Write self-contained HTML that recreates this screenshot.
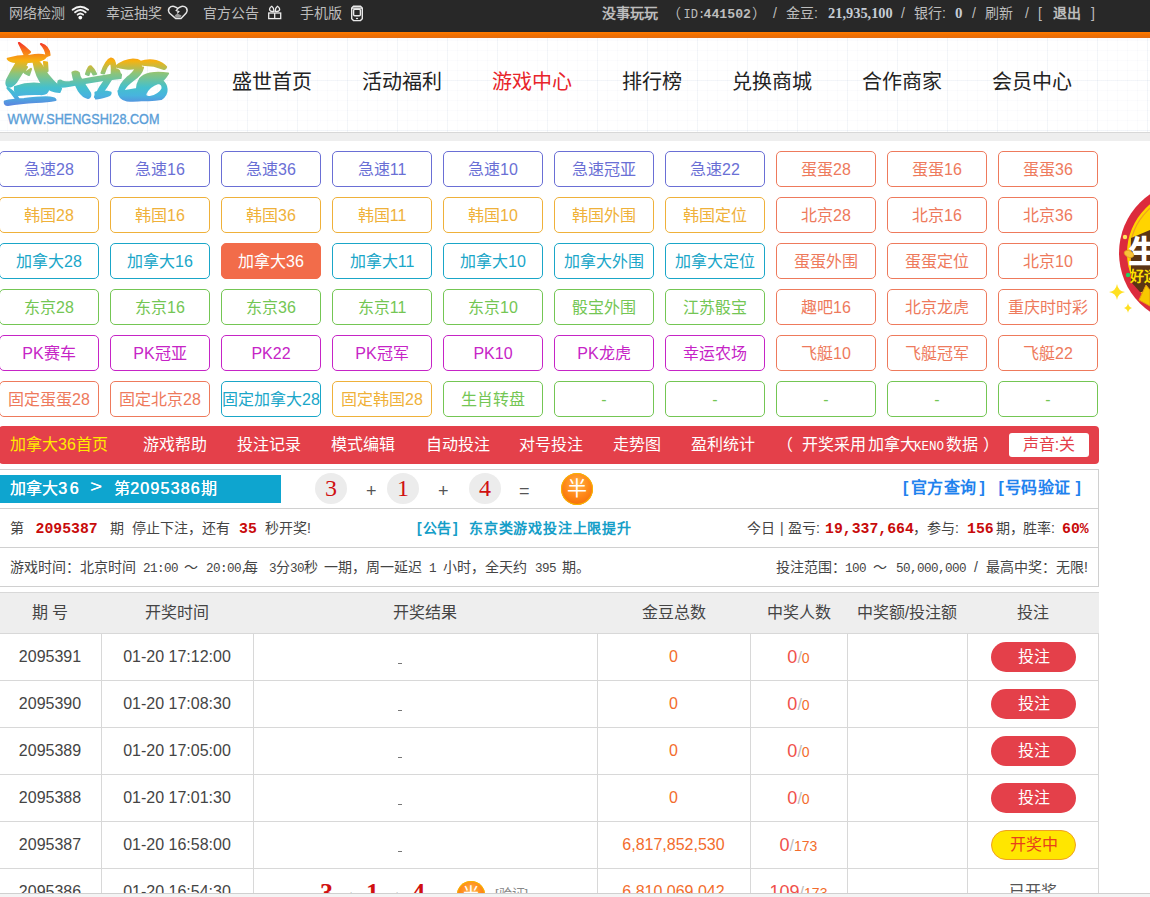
<!DOCTYPE html>
<html lang="zh-CN"><head><meta charset="utf-8">
<style>
*{margin:0;padding:0;box-sizing:border-box}
html,body{width:1150px;height:897px;overflow:hidden;background:#fff;font-family:"Liberation Sans",sans-serif;color:#333;position:relative}
.abs{position:absolute;white-space:nowrap}
b{font-weight:bold}
#top{position:absolute;left:0;top:0;width:1150px;height:32px;background:#282828;color:#bdbdbd;font-size:14px}
#top .tt{top:4.5px;line-height:16px}
#top .b{font-weight:bold}
#top .num{font-family:"Liberation Serif",serif;font-weight:bold;color:#c5ccd4;font-size:15px}
#orange{position:absolute;left:0;top:32px;width:1150px;height:6px;background:linear-gradient(#ff7a00,#f07000 50%,#e66c10)}
#hdr{position:absolute;left:0;top:38px;width:1150px;height:94px;background-color:#fff;
 background-image:linear-gradient(to right,rgba(200,212,228,.17) 1px,transparent 1px),linear-gradient(to bottom,rgba(200,212,228,.17) 1px,transparent 1px),
 linear-gradient(to right,rgba(205,215,230,.08) 1px,transparent 1px),linear-gradient(to bottom,rgba(205,215,230,.08) 1px,transparent 1px);
 background-size:50px 50px,50px 50px,10px 10px,10px 10px;background-position:47px 42px,47px 42px,7px 2px,7px 2px}
#hline{position:absolute;left:0;top:132px;width:1150px;height:1px;background:#d8d8d8}
#hband{position:absolute;left:0;top:133px;width:1150px;height:8px;background:#eeeeee}
.nav{position:absolute;top:70px;font-size:20px;line-height:24px;color:#222;white-space:nowrap}
.gb{position:absolute;width:100px;height:36px;border:1px solid;border-radius:5px;font-size:16px;line-height:36px;text-align:center;background:#fff;white-space:nowrap}
.c1{color:#6a6fd5;border-color:#6a6fd5}
.c2{color:#efb13a;border-color:#efb13a}
.c3{color:#1aa6c8;border-color:#1aa6c8}
.c4{color:#74c654;border-color:#74c654}
.c5{color:#c624c6;border-color:#c624c6}
.c6{color:#ee7a5c;border-color:#ee7a5c}
.gb.act{background:#f26c4a;border-color:#f26c4a;color:#fff}
#rbar{position:absolute;left:-1px;top:426px;width:1100px;height:38px;background:#e4404a;border-radius:4px;color:#fff;font-size:16px}
#rbar .it{position:absolute;top:9px;line-height:20px;white-space:nowrap}
#sound{position:absolute;left:1010px;top:7px;width:80px;height:24px;background:#fff;border-radius:3px;color:#e4404a;font-size:16px;line-height:24px;text-align:center}
#info{position:absolute;left:-1px;top:469px;width:1100px;height:118px;border:1px solid #d0d0d0}
.ln{position:absolute;height:1px;background:#d0d0d0}
#crumb{position:absolute;left:0;top:475px;width:281px;height:28px;background:#0ea5cf;color:#fff;font-size:16px;font-weight:bold;line-height:20px}
.ball{position:absolute;top:473px;width:32px;height:31px;border-radius:50%;background:#ececec;color:#d01010;font-family:"Liberation Serif",serif;font-size:24px;line-height:31px;text-align:center}
.op{top:481px;font-size:18px;color:#555;line-height:20px}
.oball{position:absolute;border-radius:50%;background:radial-gradient(circle at 50% 35%,#ffb347 0%,#ff8a1a 45%,#f06000 100%);color:#fff;text-align:center;box-shadow:0 0 0 1px #f7b500 inset}
.lnk{top:479px;font-size:16px;font-weight:bold;color:#1f82ee;line-height:18px;letter-spacing:0.3px}
.r2{top:520px;font-size:14px;line-height:16px;color:#444}
.r3{top:559px;font-size:14px;line-height:16px;color:#444}
.red{color:#d01010}
.notice{color:#159ec8;font-weight:bold}
#thead{position:absolute;left:-1px;top:592px;width:1100px;height:42px;background:#eeeeee;border-top:1px solid #d8d8d8;border-bottom:1px solid #d8d8d8}
.th{position:absolute;top:603px;line-height:20px;font-size:16px;color:#444;text-align:center}
.ln2{position:absolute;height:1px;background:#d8d8d8}
.vl{position:absolute;top:634px;width:1px;height:270px;background:#d8d8d8}
.td{position:absolute;height:46px;line-height:46px;font-size:16px;color:#444;text-align:center;white-space:nowrap}
.dash{position:absolute;width:4px;height:1px;background:#777}
.gold{color:#f36c2c}
.w1{color:#f0504a;font-size:18px}
.sl{color:#bbb;font-size:16px}
.w2{color:#f36c2c;font-size:14px}
.bet{position:absolute;width:85px;height:30px;border-radius:15px;background:#e4404a;color:#fff;font-size:16px;line-height:30px;text-align:center}
.kj{position:absolute;width:85px;height:30px;border-radius:15px;background:#ffe600;border:1px solid #f0a020;color:#e8401a;font-size:16px;line-height:28px;text-align:center}
.bn{font-family:"Liberation Serif",serif;font-weight:bold;font-size:26px;color:#d01010;line-height:26px}
#foot{position:absolute;left:0;top:893px;width:1150px;height:4px;background:#f4f4f4;border-top:1px solid #d0d0d0}
.rn{font-family:"Liberation Mono",monospace;font-weight:bold;font-size:14.8px;color:#c80a0a}
.nl{letter-spacing:0.8px}
.m{font-family:"Liberation Mono",monospace;font-size:12.6px;letter-spacing:-0.56px}
.cd{font-family:"Liberation Sans",sans-serif;font-size:16px;letter-spacing:2.6px}
.cd2{font-family:"Liberation Sans",sans-serif;font-size:16px;letter-spacing:1.2px}
#crumb{font-weight:normal;text-shadow:0.4px 0 0 #fff}

</style></head><body>
<div id="top">
<span class="abs tt" style="left:9px">网络检测</span>
<svg class="abs" style="left:0;top:0" width="380" height="31" viewBox="0 0 380 31">
<g fill="none" stroke="#f2f2f2" stroke-linecap="round">
<path d="M72.6 9.7 Q80.3 3.6 88.1 9.7" stroke-width="1.9"/>
<path d="M75.1 12.3 Q80.3 7.6 85.6 12.3" stroke-width="1.9"/>
<path d="M77.6 14.7 Q80.3 12.2 83.1 14.7" stroke-width="1.8"/>
</g>
<circle cx="80.3" cy="17.6" r="1.9" fill="#fff"/>
<path d="M175.6 18.4 L181 18.4 L186 13.2 Q188 10.5 186.4 8 Q184.5 5.9 181.5 6.4 Q179.2 6.9 177.8 8.6 Q176.4 6.9 174.1 6.4 Q171.1 5.9 169.2 8 Q167.6 10.5 169.6 13.2 Z" fill="none" stroke="#e6e6e6" stroke-width="1.5" stroke-linejoin="round"/>
<path d="M177.8 8.6 L176.2 10.6 L178.8 11.6 L177.2 13.4" fill="none" stroke="#e6e6e6" stroke-width="1.2"/>
<path d="M174.8 15.2 L177.4 13.6 L181.5 15.4 L180.3 17.8 L175.8 17.8 Z" fill="#9a9a9a"/>
<g fill="none" stroke="#ececec" stroke-width="1.3">
<path d="M274 11.3 Q270.5 12 269.6 10 Q269.2 7.6 271.8 6.2 Q273.8 7.5 274 11.3 Z"/>
<path d="M275.2 11.3 Q278.7 12 279.6 10 Q280 7.6 277.4 6.2 Q275.4 7.5 275.2 11.3 Z"/>
<rect x="268.7" y="13" width="12" height="5.6"/>
</g>
<path d="M274.7 13 V18.6" stroke="#ececec" stroke-width="1.3"/>
<g fill="none" stroke="#e8e8e8" stroke-width="1.4">
<path d="M353.5 6.3 H360.5 L362.3 8 V18.8 L360.5 20.6 H353.5 L351.7 18.8 V8 Z"/>
<path d="M352 8.1 H362"/>
<rect x="353.6" y="9.3" width="6.8" height="6.4" rx="1.2"/>
</g>
<ellipse cx="357" cy="18.5" rx="1.2" ry="0.7" fill="#e8e8e8"/>
</svg>
<span class="abs tt" style="left:106px">幸运抽奖</span>
<span class="abs tt" style="left:203px">官方公告</span>
<span class="abs tt" style="left:300px">手机版</span>
<span class="abs tt b" style="left:602px">没事玩玩</span>
<span class="abs tt" style="left:667px">（</span>
<span class="abs tt" style="left:683.5px;top:7px;font-family:'Liberation Mono',monospace;font-size:12px">ID:</span>
<span class="abs tt" style="left:703.5px;top:7px;font-family:'Liberation Mono',monospace;font-size:13.2px;font-weight:bold">441502</span>
<span class="abs tt" style="left:752px">）</span>
<span class="abs tt" style="left:773px">/</span>
<span class="abs tt" style="left:786px">金豆:</span>
<span class="abs tt num" style="left:828px;font-size:14.4px">21,935,100</span>
<span class="abs tt" style="left:901px">/</span>
<span class="abs tt" style="left:914px">银行:</span>
<span class="abs tt num" style="left:955px">0</span>
<span class="abs tt" style="left:972px">/</span>
<span class="abs tt" style="left:985px">刷新</span>
<span class="abs tt" style="left:1025px">/</span>
<span class="abs tt" style="left:1038px">[</span>
<span class="abs tt b" style="left:1053px">退出</span>
<span class="abs tt" style="left:1091px">]</span>
</div>
<div id="orange"></div>
<div id="hdr"></div>
<div id="hline"></div><div id="hband"></div>
<div class="nav" style="left:232px">盛世首页</div>
<div class="nav" style="left:362px">活动福利</div>
<div class="nav" style="left:492px;color:#e8242a">游戏中心</div>
<div class="nav" style="left:622px">排行榜</div>
<div class="nav" style="left:732px">兑换商城</div>
<div class="nav" style="left:862px">合作商家</div>
<div class="nav" style="left:992px">会员中心</div>
<svg class="abs" style="left:0;top:0" width="180" height="132" viewBox="0 0 180 132">
<defs><linearGradient id="lg" x1="0" y1="42" x2="0" y2="105" gradientUnits="userSpaceOnUse">
<stop offset="0" stop-color="#f5302a"/><stop offset="0.15" stop-color="#f77a18"/><stop offset="0.3" stop-color="#f7b210"/><stop offset="0.5" stop-color="#8cc47a"/><stop offset="0.72" stop-color="#45c0cc"/><stop offset="0.85" stop-color="#48b4de"/><stop offset="1" stop-color="#5a88e0"/></linearGradient></defs>
<g fill="url(#lg)" stroke="url(#lg)" stroke-width="2.2" stroke-linejoin="round">
<!-- 盛 -->
<path d="M19 43 Q25 47 30 52 L25 55.5 Q22 49 19 43 Z"/>
<path d="M41 44 Q49 46.5 49.5 55 L46.5 56 Q46 49 41 44 Z"/>
<path d="M7.8 58.7 Q18 55.5 30 55.8 Q40 54 46.5 56 Q44 60 36 61.5 Q24 62.5 16 62 Q10 61.5 7.8 58.7 Z"/>
<path d="M17 62 L27 62 Q23 72 16 82 Q12 87 8 86.5 Q5.5 84.5 7 80 Q12 70 17 62 Z"/>
<path d="M21 66 L27 67 L24 72 Z M25 73 L31 69 L29 75 Z"/>
<path d="M33.5 61.5 Q39 60.5 42 66 Q47 75 53 81 Q58 86 61 88.5 L59.5 92 Q51 91 44 86 Q36 77 33.5 61.5 Z"/>
<path d="M44 62 L47 62.5 L47.5 71 L45 71 Z"/>
<path d="M15 87 Q28 82.5 40 84 Q47.5 85.5 48 90 Q47 94.5 40 94 Q30 93.5 18 95 Q14.5 93 15 87 Z"/>
<path d="M7.5 88 Q14 91 18.5 99 L17 100 Q12 93 7.5 88 Z"/>
<path d="M4.8 101.5 Q12 99.5 24 99 Q40 97 50 97.5 Q55 98 55.5 100 Q48 101.5 36 102 Q20 103 8 105 Q4.5 104.5 4.8 101.5 Z"/>
<!-- 世 -->
<path d="M58.5 81.5 Q60 79.5 62 81.5 Q64 83 70 82 Q90 78 110 75 Q118 74 121 74.5 L120.5 78 Q100 80 82 83.5 Q66 87 60 86.5 Q57.5 85 58.5 81.5 Z"/>
<path d="M72.5 72.5 Q76.5 70.5 78.8 73 Q79 76 81 79 Q86 87 90 93 Q91 97 88 98 Q83 97 79 91 Q74 82 72.5 72.5 Z"/>
<path d="M86 74 Q89 65 91 66.5 Q94 69 96 74 L93.5 74.5 Q91.5 70.5 90 71 Q89 73 88.5 75 Z"/>
<path d="M101.5 73 Q106 60 111 58.5 Q115 59 115 66 Q115 71 114.5 76 L111.5 76 Q112.5 67 111 62.5 Q107 64 104 73.5 Z"/>
<path d="M106 79 L111 79.5 Q106 88 99.5 96 Q97 99 95 97 Q99 88 106 79 Z"/>
<path d="M95.5 92.5 Q104 90.5 110.5 92.5 Q111 95 107 96 Q100 98 96 98.5 Z"/>
<path d="M115.5 70 Q117 68.5 119 71 L120 74 L116.5 74.5 Z"/>
<!-- 28 -->
<path d="M115.6 66.5 Q124 60 133 59.5 Q138 59.5 140 61.5 L141 66.5 Q134 69.5 126 68.5 Q119 67.5 115.6 66.5 Z"/>
<path d="M136 68 L143 67.5 Q141 75 133 80 Q126 85 123.5 90 L119 91.5 Q120 84 127 78 Q134 73 136 68 Z"/>
<path d="M140 62 Q148 59.5 156 61 Q163 63 166 67 Q165 69.5 162.5 68.5 Q154 65 145 65 Q141 64.5 140 62 Z"/>
<path fill-rule="evenodd" d="M118.5 91 Q119 99 127 100.5 Q136 101 144 100 Q154 100.5 161 99 Q167 95 166.5 89 Q166 84 162 81 Q166 77 168 73.5 Q158 72 150 73.5 Q143 75 140 79 Q137 84 137 89 Q130 90.5 121.5 91.5 Z M145.5 93.5 Q149 86 158 83 Q163.5 83.5 162.5 89 Q159 95.5 150 97 Q144.5 97.5 145.5 93.5 Z"/>
</g>
<text x="7.5" y="124" font-family="Liberation Sans" font-size="14.2" fill="#5a9ed8" stroke="#5a9ed8" stroke-width="0.35" textLength="152" lengthAdjust="spacingAndGlyphs">WWW.SHENGSHI28.COM</text>
</svg>

<div class="gb c1" style="left:-1px;top:151px">急速28</div>
<div class="gb c1" style="left:110px;top:151px">急速16</div>
<div class="gb c1" style="left:221px;top:151px">急速36</div>
<div class="gb c1" style="left:332px;top:151px">急速11</div>
<div class="gb c1" style="left:443px;top:151px">急速10</div>
<div class="gb c1" style="left:554px;top:151px">急速冠亚</div>
<div class="gb c1" style="left:665px;top:151px">急速22</div>
<div class="gb c6" style="left:776px;top:151px">蛋蛋28</div>
<div class="gb c6" style="left:887px;top:151px">蛋蛋16</div>
<div class="gb c6" style="left:998px;top:151px">蛋蛋36</div>
<div class="gb c2" style="left:-1px;top:197px">韩国28</div>
<div class="gb c2" style="left:110px;top:197px">韩国16</div>
<div class="gb c2" style="left:221px;top:197px">韩国36</div>
<div class="gb c2" style="left:332px;top:197px">韩国11</div>
<div class="gb c2" style="left:443px;top:197px">韩国10</div>
<div class="gb c2" style="left:554px;top:197px">韩国外围</div>
<div class="gb c2" style="left:665px;top:197px">韩国定位</div>
<div class="gb c6" style="left:776px;top:197px">北京28</div>
<div class="gb c6" style="left:887px;top:197px">北京16</div>
<div class="gb c6" style="left:998px;top:197px">北京36</div>
<div class="gb c3" style="left:-1px;top:243px">加拿大28</div>
<div class="gb c3" style="left:110px;top:243px">加拿大16</div>
<div class="gb c3 act" style="left:221px;top:243px">加拿大36</div>
<div class="gb c3" style="left:332px;top:243px">加拿大11</div>
<div class="gb c3" style="left:443px;top:243px">加拿大10</div>
<div class="gb c3" style="left:554px;top:243px">加拿大外围</div>
<div class="gb c3" style="left:665px;top:243px">加拿大定位</div>
<div class="gb c6" style="left:776px;top:243px">蛋蛋外围</div>
<div class="gb c6" style="left:887px;top:243px">蛋蛋定位</div>
<div class="gb c6" style="left:998px;top:243px">北京10</div>
<div class="gb c4" style="left:-1px;top:289px">东京28</div>
<div class="gb c4" style="left:110px;top:289px">东京16</div>
<div class="gb c4" style="left:221px;top:289px">东京36</div>
<div class="gb c4" style="left:332px;top:289px">东京11</div>
<div class="gb c4" style="left:443px;top:289px">东京10</div>
<div class="gb c4" style="left:554px;top:289px">骰宝外围</div>
<div class="gb c4" style="left:665px;top:289px">江苏骰宝</div>
<div class="gb c6" style="left:776px;top:289px">趣吧16</div>
<div class="gb c6" style="left:887px;top:289px">北京龙虎</div>
<div class="gb c6" style="left:998px;top:289px">重庆时时彩</div>
<div class="gb c5" style="left:-1px;top:335px">PK赛车</div>
<div class="gb c5" style="left:110px;top:335px">PK冠亚</div>
<div class="gb c5" style="left:221px;top:335px">PK22</div>
<div class="gb c5" style="left:332px;top:335px">PK冠军</div>
<div class="gb c5" style="left:443px;top:335px">PK10</div>
<div class="gb c5" style="left:554px;top:335px">PK龙虎</div>
<div class="gb c5" style="left:665px;top:335px">幸运农场</div>
<div class="gb c6" style="left:776px;top:335px">飞艇10</div>
<div class="gb c6" style="left:887px;top:335px">飞艇冠军</div>
<div class="gb c6" style="left:998px;top:335px">飞艇22</div>
<div class="gb c6" style="left:-1px;top:381px">固定蛋蛋28</div>
<div class="gb c6" style="left:110px;top:381px">固定北京28</div>
<div class="gb c3" style="left:221px;top:381px">固定加拿大28</div>
<div class="gb c2" style="left:332px;top:381px">固定韩国28</div>
<div class="gb c4" style="left:443px;top:381px">生肖转盘</div>
<div class="gb c4" style="left:554px;top:381px">-</div>
<div class="gb c4" style="left:665px;top:381px">-</div>
<div class="gb c4" style="left:776px;top:381px">-</div>
<div class="gb c4" style="left:887px;top:381px">-</div>
<div class="gb c4" style="left:998px;top:381px">-</div>
<svg class="abs" style="left:1100px;top:180px" width="50" height="150" viewBox="1100 180 50 150">
<circle cx="1190" cy="253" r="71" fill="#dc2b3c"/>
<circle cx="1190" cy="253" r="63" fill="#ffd400"/>
<circle cx="1190" cy="253" r="60" fill="none" stroke="#f0a020" stroke-width="1.2"/>
<path d="M1131 238 L1150 230 L1150 292 L1140 292 L1131 282 Z" fill="#5b3414"/>
<path d="M1139 300 L1146 285 L1150 290 L1150 306 Z" fill="#f7c800" stroke="#e89a10" stroke-width="1"/>
<text x="1129" y="262" font-size="30" font-weight="bold" fill="#fff" font-family="Liberation Sans" stroke="#fff" stroke-width="1">生</text>
<text x="1130" y="281" font-size="14" font-weight="bold" fill="#ffe000" font-family="Liberation Sans">好运</text>
<circle cx="1125" cy="237" r="2.2" fill="#ffe860"/>
<ellipse cx="1129" cy="254" rx="5" ry="3.2" fill="#f9c33a" stroke="#e0a020" stroke-width="0.8" transform="rotate(25 1129 254)"/>
<circle cx="1128" cy="275" r="2.2" fill="#20d060"/>
<path d="M1117 284 Q1118 291 1125 292 Q1118 293 1117 300 Q1116 293 1109 292 Q1116 291 1117 284 Z" fill="#ffe020"/>
<path d="M1128 303 Q1128.5 307 1132 308 Q1128.5 309 1128 313 Q1127.5 309 1124 308 Q1127.5 307 1128 303 Z" fill="#ffe020"/>
</svg>

<div id="rbar">
<span class="it" style="left:11px;color:#ffea00">加拿大36首页</span>
<span class="it" style="left:144px;">游戏帮助</span>
<span class="it" style="left:238px;">投注记录</span>
<span class="it" style="left:332px;">模式编辑</span>
<span class="it" style="left:427px;">自动投注</span>
<span class="it" style="left:520px;">对号投注</span>
<span class="it" style="left:614px;">走势图</span>
<span class="it" style="left:692px;">盈利统计</span>
<span class="it" style="left:778px;">（</span>
<span class="it" style="left:803px;">开奖采用</span>
<span class="it" style="left:869px;">加拿大</span>
<span class="it" style="left:947px;">数据</span>
<span class="it" style="left:984px;">）</span>
<span class="it" style="left:915px;top:11px;font-family:'Liberation Mono',monospace;font-size:13.5px;transform:scaleX(0.93);transform-origin:0 0">KENO</span>
<div id="sound">声音:关</div>
</div>
<div id="info"></div>
<div class="ln" style="left:0;top:508px;width:1098px"></div>
<div class="ln" style="left:0;top:547px;width:1098px"></div>
<div id="crumb"><span class="abs" style="left:10px;top:4px">加拿大<span class="cd">36</span></span><span class="abs" style="left:90px;top:1px;font-size:20px;transform:scaleY(0.8)">&gt;</span><span class="abs" style="left:114px;top:4px">第<span class="cd2">2095386</span>期</span></div>
<div class="ball" style="left:315px">3</div>
<div class="ball" style="left:387px">1</div>
<div class="ball" style="left:469px">4</div>
<span class="abs op" style="left:366px">+</span><span class="abs op" style="left:438px">+</span><span class="abs op" style="left:519px">=</span>
<div class="oball" style="left:561px;top:473px;width:32px;height:32px"><span style="font-size:20px;line-height:32px">半</span></div>
<span class="abs lnk" style="left:903px">[</span>
<span class="abs lnk" style="left:911px">官方查询</span>
<span class="abs lnk" style="left:979.5px">]</span>
<span class="abs lnk" style="left:998.5px">[</span>
<span class="abs lnk" style="left:1005px">号码验证</span>
<span class="abs lnk" style="left:1075.5px">]</span>
<span class="abs r2" style="left:10px;">第</span>
<span class="abs r2" style="left:35.5px;"><b class="rn">2095387</b></span>
<span class="abs r2" style="left:110px;">期</span>
<span class="abs r2" style="left:132px;">停止下注，还有</span>
<span class="abs r2" style="left:239px;"><b class="rn">35</b></span>
<span class="abs r2" style="left:265px;">秒开奖!</span>
<span class="abs r2" style="left:417px;"><span class="notice">[</span></span>
<span class="abs r2" style="left:423px;"><span class="notice">公告</span></span>
<span class="abs r2" style="left:453px;"><span class="notice">]</span></span>
<span class="abs r2" style="left:469px;"><span class="notice nl">东京类游戏投注上限提升</span></span>
<span class="abs r2" style="left:747px;">今日</span>
<span class="abs r2" style="left:780px;">|</span>
<span class="abs r2" style="left:788px;">盈亏:</span>
<span class="abs r2" style="left:825px;"><b class="rn">19,337,664</b></span>
<span class="abs r2" style="left:913px;">，</span>
<span class="abs r2" style="left:927px;">参与:</span>
<span class="abs r2" style="left:967px;"><b class="rn">156</b></span>
<span class="abs r2" style="left:996px;">期，</span>
<span class="abs r2" style="left:1023px;">胜率:</span>
<span class="abs r2" style="left:1062px;"><b class="rn">60%</b></span>
<span class="abs r3" style="left:10px;">游戏时间：</span>
<span class="abs r3" style="left:80px;">北京时间</span>
<span class="abs r3" style="left:143px;"><span class="m">21:00</span></span>
<span class="abs r3" style="left:184px;">～</span>
<span class="abs r3" style="left:206px;"><span class="m">20:00,</span></span>
<span class="abs r3" style="left:244px;">每</span>
<span class="abs r3" style="left:269px;"><span class="m">3</span>分<span class="m">30</span>秒</span>
<span class="abs r3" style="left:324px;">一期，周一延迟</span>
<span class="abs r3" style="left:429px;"><span class="m">1</span></span>
<span class="abs r3" style="left:443px;">小时，全天约</span>
<span class="abs r3" style="left:535px;"><span class="m">395</span></span>
<span class="abs r3" style="left:562px;">期。</span>
<span class="abs r3" style="left:776px;">投注范围：</span>
<span class="abs r3" style="left:845px;"><span class="m">100</span></span>
<span class="abs r3" style="left:873px;">～</span>
<span class="abs r3" style="left:896px;"><span class="m">50,000,000</span></span>
<span class="abs r3" style="left:974px;">/</span>
<span class="abs r3" style="left:986px;">最高中奖：无限!</span>
<div id="thead"></div>
<div class="th" style="left:-1px;width:102px">期 号</div>
<div class="th" style="left:101px;width:152px">开奖时间</div>
<div class="th" style="left:253px;width:344px">开奖结果</div>
<div class="th" style="left:597px;width:153px">金豆总数</div>
<div class="th" style="left:750px;width:97px">中奖人数</div>
<div class="th" style="left:847px;width:120px">中奖额/投注额</div>
<div class="th" style="left:967px;width:131px">投注</div>
<div class="ln2" style="left:0;top:633px;width:1098px"></div>
<div class="ln2" style="left:0;top:680px;width:1098px"></div>
<div class="ln2" style="left:0;top:727px;width:1098px"></div>
<div class="ln2" style="left:0;top:774px;width:1098px"></div>
<div class="ln2" style="left:0;top:821px;width:1098px"></div>
<div class="ln2" style="left:0;top:868px;width:1098px"></div>
<div class="vl" style="left:101px"></div>
<div class="vl" style="left:253px"></div>
<div class="vl" style="left:597px"></div>
<div class="vl" style="left:750px"></div>
<div class="vl" style="left:847px"></div>
<div class="vl" style="left:967px"></div>
<div class="vl" style="left:1098px"></div>
<div class="td" style="left:-1px;top:634px;width:102px;">2095391</div>
<div class="td" style="left:101px;top:634px;width:152px;">01-20 17:12:00</div>
<div class="dash" style="left:398px;top:663px"></div>
<div class="td" style="left:597px;top:634px;width:153px;"><span class="gold">0</span></div>
<div class="td" style="left:750px;top:634px;width:97px;"><span class="w1">0</span><span class="sl">/</span><span class="w2">0</span></div>
<div class="bet" style="left:991px;top:642px">投注</div>
<div class="td" style="left:-1px;top:681px;width:102px;">2095390</div>
<div class="td" style="left:101px;top:681px;width:152px;">01-20 17:08:30</div>
<div class="dash" style="left:398px;top:710px"></div>
<div class="td" style="left:597px;top:681px;width:153px;"><span class="gold">0</span></div>
<div class="td" style="left:750px;top:681px;width:97px;"><span class="w1">0</span><span class="sl">/</span><span class="w2">0</span></div>
<div class="bet" style="left:991px;top:689px">投注</div>
<div class="td" style="left:-1px;top:728px;width:102px;">2095389</div>
<div class="td" style="left:101px;top:728px;width:152px;">01-20 17:05:00</div>
<div class="dash" style="left:398px;top:757px"></div>
<div class="td" style="left:597px;top:728px;width:153px;"><span class="gold">0</span></div>
<div class="td" style="left:750px;top:728px;width:97px;"><span class="w1">0</span><span class="sl">/</span><span class="w2">0</span></div>
<div class="bet" style="left:991px;top:736px">投注</div>
<div class="td" style="left:-1px;top:775px;width:102px;">2095388</div>
<div class="td" style="left:101px;top:775px;width:152px;">01-20 17:01:30</div>
<div class="dash" style="left:398px;top:804px"></div>
<div class="td" style="left:597px;top:775px;width:153px;"><span class="gold">0</span></div>
<div class="td" style="left:750px;top:775px;width:97px;"><span class="w1">0</span><span class="sl">/</span><span class="w2">0</span></div>
<div class="bet" style="left:991px;top:783px">投注</div>
<div class="td" style="left:-1px;top:822px;width:102px;">2095387</div>
<div class="td" style="left:101px;top:822px;width:152px;">01-20 16:58:00</div>
<div class="dash" style="left:398px;top:851px"></div>
<div class="td" style="left:597px;top:822px;width:153px;"><span class="gold">6,817,852,530</span></div>
<div class="td" style="left:750px;top:822px;width:97px;"><span class="w1">0</span><span class="sl">/</span><span class="w2">173</span></div>
<div class="kj" style="left:991px;top:830px">开奖中</div>
<div class="td" style="left:-1px;top:869px;width:102px;">2095386</div>
<div class="td" style="left:101px;top:869px;width:152px;">01-20 16:54:30</div>
<div class="abs" style="left:0;top:0"></div>
<div class="td" style="left:597px;top:869px;width:153px;"><span class="gold">6,810,069,042</span></div>
<div class="td" style="left:750px;top:869px;width:97px;"><span class="w1">109</span><span class="sl">/</span><span class="w2">173</span></div>
<div class="td" style="left:967px;top:869px;width:131px;"><span style="color:#555">已开奖</span></div>
<span class="abs bn" style="left:320px;top:880px">3</span>
<span class="abs bn" style="left:366px;top:880px">1</span>
<span class="abs bn" style="left:412px;top:880px">4</span>
<span class="abs" style="left:347px;top:888px;font-size:14px;color:#000">+</span>
<span class="abs" style="left:393px;top:888px;font-size:14px;color:#000">+</span>
<div class="oball" style="left:457px;top:881px;width:28px;height:28px"><span style="font-size:18px;line-height:28px">半</span></div>
<span class="abs" style="left:495px;top:883px;font-size:13px;color:#888">[验证]</span>
<div id="foot"></div>
</body></html>
